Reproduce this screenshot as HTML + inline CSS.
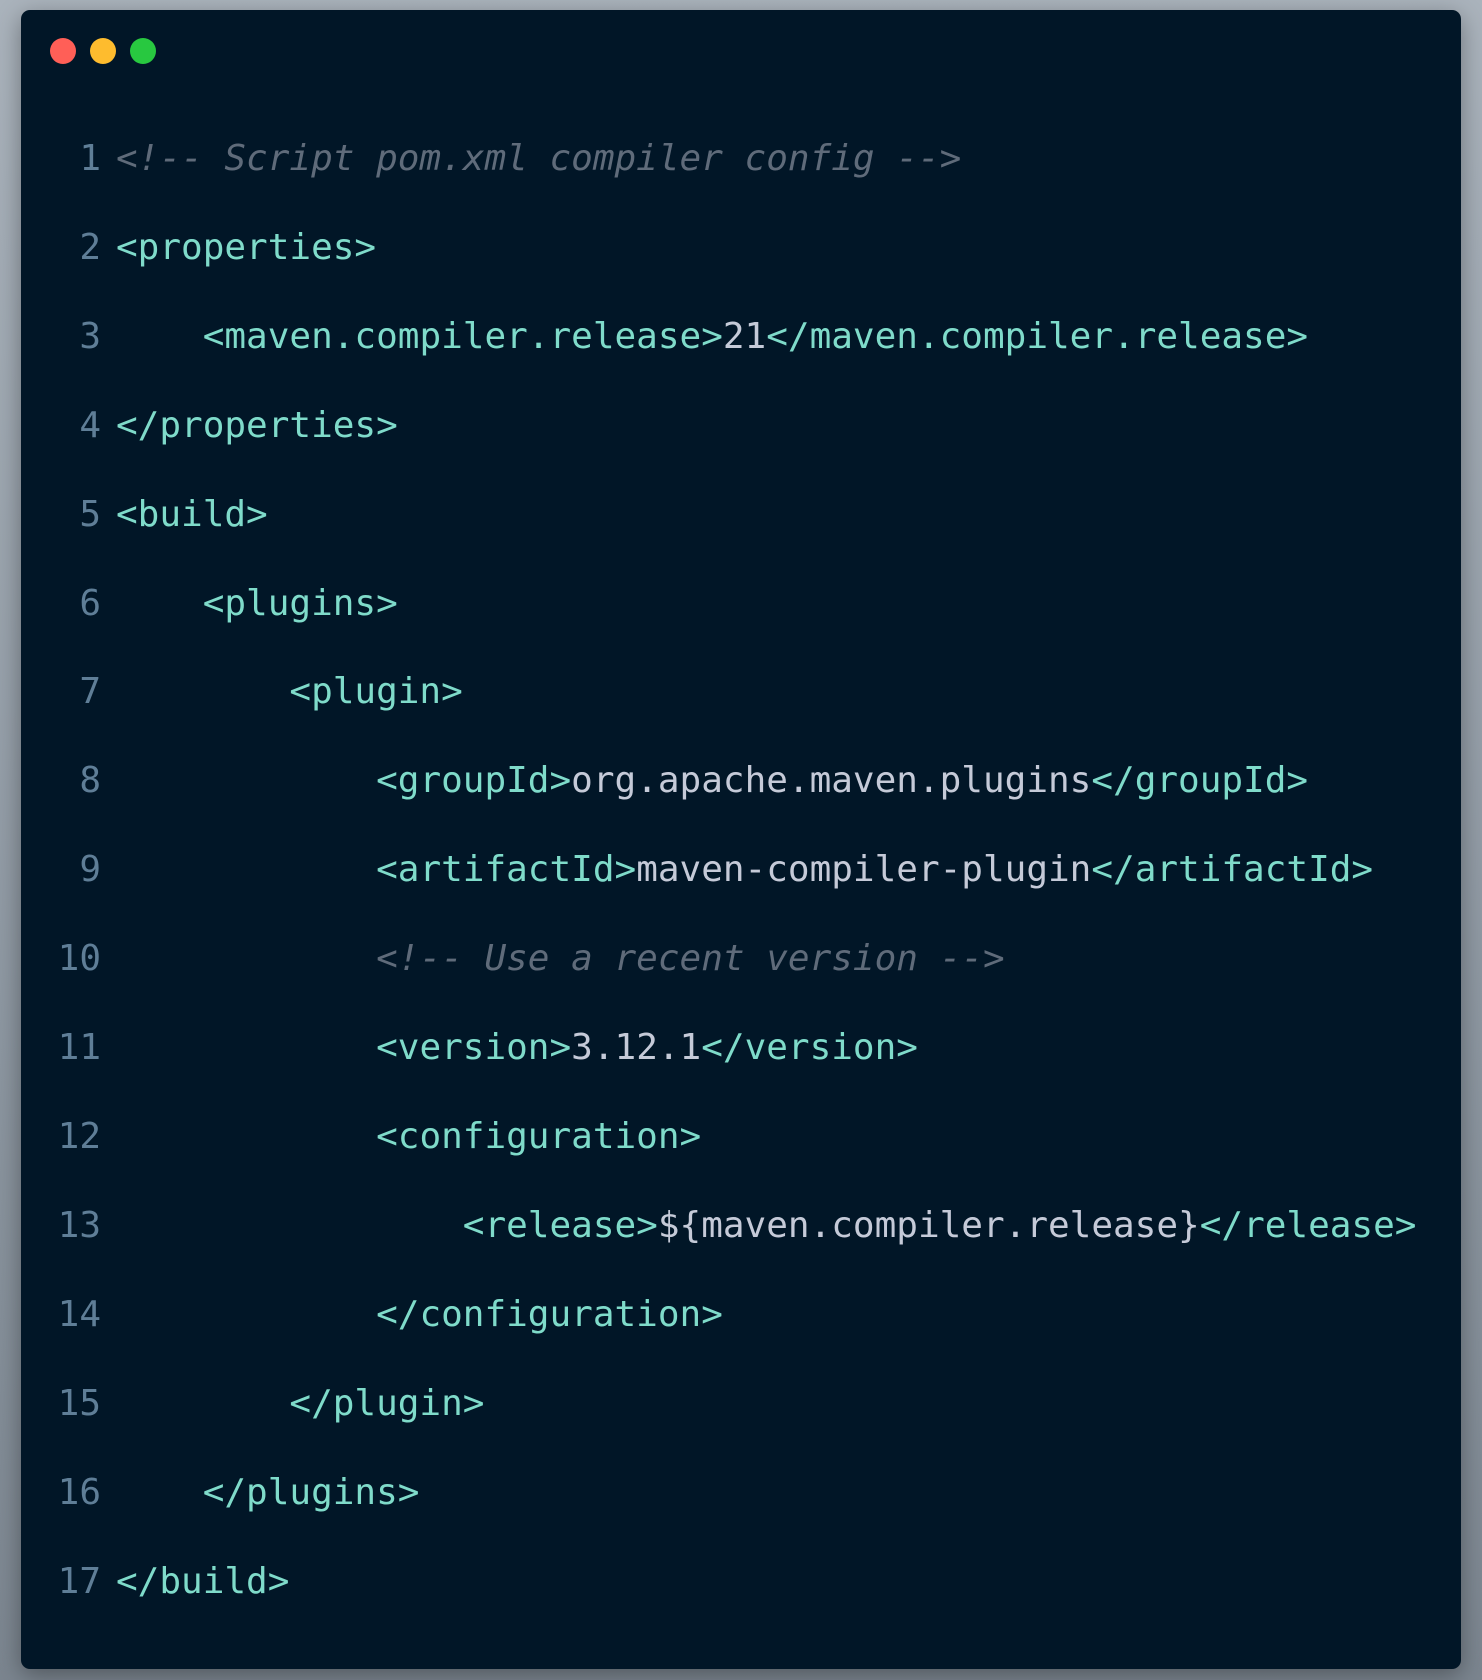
<!DOCTYPE html>
<html><head><meta charset="utf-8"><style>
html,body{margin:0;padding:0;}
body{width:1482px;height:1680px;background:linear-gradient(180deg,#aab3bc 0%,#8d97a1 60%,#7b858f 100%);position:relative;overflow:hidden;}
.win{position:absolute;left:21px;top:10px;width:1440px;height:1659px;background:#011627;border-radius:9px;box-shadow:0 6px 24px rgba(0,0,0,.35);}
.dot{position:absolute;top:28px;width:26px;height:26px;border-radius:50%;}
.code{position:absolute;left:0;top:105px;font-family:"DejaVu Sans Mono","Liberation Mono",monospace;font-size:36px;line-height:88.9px;white-space:pre;}
.ln{display:inline-block;width:80px;text-align:right;color:#5f7e97;margin-right:15px;}
.t{color:#7fdbca}.v{color:#c5cad8}.c{color:#5f6b7a;font-style:italic}
</style></head><body>
<div class="win">
<div class="dot" style="left:29px;background:#ff5f57"></div>
<div class="dot" style="left:69px;background:#febc2e"></div>
<div class="dot" style="left:109px;background:#28c840"></div>
<div class="code"><div><span class="ln">1</span><span class="c">&lt;!-- Script pom.xml compiler config --&gt;</span></div><div><span class="ln">2</span><span class="t">&lt;properties&gt;</span></div><div><span class="ln">3</span>    <span class="t">&lt;maven.compiler.release&gt;</span><span class="v">21</span><span class="t">&lt;/maven.compiler.release&gt;</span></div><div><span class="ln">4</span><span class="t">&lt;/properties&gt;</span></div><div><span class="ln">5</span><span class="t">&lt;build&gt;</span></div><div><span class="ln">6</span>    <span class="t">&lt;plugins&gt;</span></div><div><span class="ln">7</span>        <span class="t">&lt;plugin&gt;</span></div><div><span class="ln">8</span>            <span class="t">&lt;groupId&gt;</span><span class="v">org.apache.maven.plugins</span><span class="t">&lt;/groupId&gt;</span></div><div><span class="ln">9</span>            <span class="t">&lt;artifactId&gt;</span><span class="v">maven-compiler-plugin</span><span class="t">&lt;/artifactId&gt;</span></div><div><span class="ln">10</span>            <span class="c">&lt;!-- Use a recent version --&gt;</span></div><div><span class="ln">11</span>            <span class="t">&lt;version&gt;</span><span class="v">3.12.1</span><span class="t">&lt;/version&gt;</span></div><div><span class="ln">12</span>            <span class="t">&lt;configuration&gt;</span></div><div><span class="ln">13</span>                <span class="t">&lt;release&gt;</span><span class="v">${maven.compiler.release}</span><span class="t">&lt;/release&gt;</span></div><div><span class="ln">14</span>            <span class="t">&lt;/configuration&gt;</span></div><div><span class="ln">15</span>        <span class="t">&lt;/plugin&gt;</span></div><div><span class="ln">16</span>    <span class="t">&lt;/plugins&gt;</span></div><div><span class="ln">17</span><span class="t">&lt;/build&gt;</span></div></div>
</div>
</body></html>
